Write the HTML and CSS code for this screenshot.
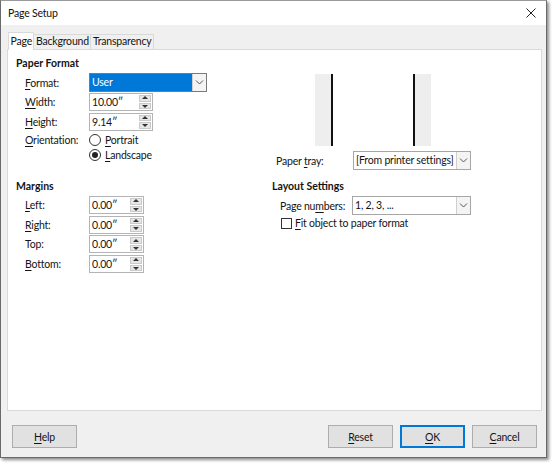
FILE: index.html
```html
<!DOCTYPE html>
<html>
<head>
<meta charset="utf-8">
<link rel="stylesheet" href="styles.css">
</head>
<body>
<div class="window">
  <div class="titlebar">
    <span class="title">Page Setup</span>
    <svg class="close" width="10" height="10" viewBox="0 0 10 10"><path d="M0.5 0.5 L9.5 9.5 M9.5 0.5 L0.5 9.5" stroke="#222" stroke-width="1"/></svg>
  </div>
  <div class="body">
    <div class="tabs">
      <div class="tab active">Page</div>
      <div class="tab">Background</div>
      <div class="tab">Transparency</div>
    </div>
    <div class="panel">
      <div class="top">
        <section class="col-left">
          <h3>Paper Format</h3>
          <div class="form">
            <label><u>F</u>ormat:</label>
            <div class="combo sel wide">
              <span class="val">User</span>
              <span class="arrow"><svg width="9" height="5" viewBox="0 0 9 5"><path d="M1 0.5 L4.5 4 L8 0.5" fill="none" stroke="#555"/></svg></span>
            </div>
            <label><u>W</u>idth:</label>
            <div class="spin s1"><span class="val">10.00″</span><span class="btns"><i class="up"></i><i class="dn"></i></span></div>
            <label><u>H</u>eight:</label>
            <div class="spin s1"><span class="val">9.14″</span><span class="btns"><i class="up"></i><i class="dn"></i></span></div>
            <label class="top-label"><u>O</u>rientation:</label>
            <div class="radios">
              <div class="radio"><span class="dot"></span><span><u>P</u>ortrait</span></div>
              <div class="radio"><span class="dot on"></span><span><u>L</u>andscape</span></div>
            </div>
          </div>
        </section>
        <section class="col-right">
          <div class="preview">
            <div class="edge left"></div>
            <div class="gap"></div>
            <div class="edge right"></div>
          </div>
          <div class="tray">
            <label>Paper <u>t</u>ray:</label>
            <div class="combo tray-combo">
              <span class="val">[From printer settings]</span>
              <span class="arrow"><svg width="9" height="5" viewBox="0 0 9 5"><path d="M1 0.5 L4.5 4 L8 0.5" fill="none" stroke="#555"/></svg></span>
            </div>
          </div>
        </section>
      </div>
      <div class="bottom">
        <section class="col-left">
          <h3>Margins</h3>
          <div class="form margins">
            <label><u>L</u>eft:</label>
            <div class="spin s2"><span class="val">0.00″</span><span class="btns"><i class="up"></i><i class="dn"></i></span></div>
            <label><u>R</u>ight:</label>
            <div class="spin s2"><span class="val">0.00″</span><span class="btns"><i class="up"></i><i class="dn"></i></span></div>
            <label>Top:</label>
            <div class="spin s2"><span class="val">0.00″</span><span class="btns"><i class="up"></i><i class="dn"></i></span></div>
            <label><u>B</u>ottom:</label>
            <div class="spin s2"><span class="val">0.00″</span><span class="btns"><i class="up"></i><i class="dn"></i></span></div>
          </div>
        </section>
        <section class="col-right layout">
          <h3>Layout Settings</h3>
          <div class="pn">
            <label>Page nu<u>m</u>bers:</label>
            <div class="combo pn-combo">
              <span class="val">1, 2, 3, ...</span>
              <span class="arrow"><svg width="9" height="5" viewBox="0 0 9 5"><path d="M1 0.5 L4.5 4 L8 0.5" fill="none" stroke="#555"/></svg></span>
            </div>
          </div>
          <div class="check"><span class="box"></span><span><u>F</u>it object to paper format</span></div>
        </section>
      </div>
    </div>
    <div class="buttons">
      <button class="btn"><u>H</u>elp</button>
      <div class="right-btns">
        <button class="btn"><u>R</u>eset</button>
        <button class="btn default"><u>O</u>K</button>
        <button class="btn"><u>C</u>ancel</button>
      </div>
    </div>
  </div>
</div>
</body>
</html>
```

FILE: styles.css
```css
* { box-sizing: border-box; }

html, body {
  margin: 0;
  padding: 0;
  background: #fff;
}

body {
  font-family: Lato, "Noto Sans", sans-serif;
  font-size: 10.5px;
  letter-spacing: -0.2px;
  color: #141414;
  width: 552px;
  height: 463px;
  overflow: hidden;
}

u { text-decoration: underline; text-underline-offset: 1.5px; }

label { white-space: nowrap; }

.window {
  width: 547px;
  height: 458px;
  border: 1px solid #6a6a6a;
  border-top-color: #9a9a9a;
  background: #f0f0f0;
  box-shadow: 2px 2px 3px rgba(0,0,0,0.45);
  display: flex;
  flex-direction: column;
}

.titlebar {
  height: 24px;
  background: #fff;
  display: flex;
  align-items: center;
  justify-content: space-between;
  padding: 0 10px 0 7px;
  flex: none;
}

.title { font-size: 10.5px; color: #111; }

.close { display: block; }

.body {
  flex: 1;
  padding: 7px 4px 0 6px;
  display: flex;
  flex-direction: column;
}

/* tab strip */
.tabs {
  display: flex;
  align-items: flex-end;
  height: 17px;
  padding-left: 1px;
  position: relative;
  z-index: 1;
}

.tab {
  height: 15px;
  line-height: 13px;
  padding: 0 1.5px;
  border: 1px solid #d9d9d9;
  border-bottom: none;
  background: #f0f0f0;
  margin-left: -1px;
}

.tab.active {
  height: 18px;
  background: #fff;
  margin-bottom: -1px;
  line-height: 17px;
  padding: 0 1.5px;
  margin-left: 0;
}

.panel {
  width: 535px;
  height: 362px;
  background: #fff;
  border: 1px solid #d9d9d9;
  display: flex;
  flex-direction: column;
  padding: 5px 0 0 8px;
}

h3 {
  margin: 0;
  font-size: 10.5px;
  letter-spacing: 0;
  font-weight: bold;
  line-height: 16px;
  height: 16px;
}

.top { display: flex; height: 123px; flex: none; }
.bottom { display: flex; }

.col-left { width: 256px; flex: none; }
.col-right { flex: 1; }

.form {
  display: grid;
  grid-template-columns: 64px auto;
  grid-auto-rows: 18px;
  justify-content: start;
  align-items: center;
  row-gap: 1.5px;
  padding-left: 9px;
  margin-top: 2.5px;
}

.form label { line-height: 18px; }
.form .top-label { align-self: start; line-height: 16px; }

.combo {
  height: 19px;
  border: 1px solid #a6a6a6;
  display: flex;
  align-items: stretch;
  background: #fff;
}

.combo .val {
  flex: 1;
  padding-left: 2px;
  line-height: 17px;
  white-space: nowrap;
  overflow: hidden;
}

.combo .arrow {
  width: 14px;
  flex: none;
  border-left: 1px solid #cfcfcf;
  background: #f4f4f4;
  display: flex;
  align-items: center;
  justify-content: center;
}

.combo.sel { border-color: #7a7a7a; }
.combo.sel .val { background: #0078d7; color: #fff; }

.wide { width: 118px; }

.spin {
  height: 18px;
  border: 1px solid #b4b4b4;
  display: flex;
  background: #fff;
}

.spin .val {
  flex: 1;
  padding-left: 2px;
  line-height: 16px;
}

.spin .btns {
  width: 13px;
  display: flex;
  flex-direction: column;
  gap: 1px;
  padding: 1px 1px 1px 0;
}

.spin .btns i {
  flex: 1;
  background: #e6e6e6;
  border: 1px solid #cacaca;
  position: relative;
}

.spin .btns i::after {
  content: "";
  position: absolute;
  left: 50%;
  top: 50%;
  margin-left: -3px;
  border-left: 3px solid transparent;
  border-right: 3px solid transparent;
}

.spin .btns .up::after { border-bottom: 3px solid #333; margin-top: -2px; }
.spin .btns .dn::after { border-top: 3px solid #333; margin-top: -1px; }

.s1 { width: 64px; }
.s2 { width: 55px; }

.form .radios { grid-row: span 2; align-self: start; }

.radios { display: flex; flex-direction: column; }

.radio {
  display: flex;
  align-items: center;
  gap: 4px;
  height: 15px;
}

.dot {
  width: 12px;
  height: 12px;
  border: 1px solid #333;
  border-radius: 50%;
  display: flex;
  align-items: center;
  justify-content: center;
  background: #fff;
}

.dot.on::after {
  content: "";
  width: 6px;
  height: 6px;
  border-radius: 50%;
  background: #222;
}

/* page preview */
.preview {
  display: flex;
  margin: 19px 0 0 43px;
  height: 72px;
}

.edge {
  width: 18px;
  background: #eeeeee;
}

.edge.left { border-right: 2px solid #111; }
.edge.right { border-left: 2px solid #111; }

.gap { width: 80px; }

.tray {
  display: flex;
  align-items: center;
  margin-top: 5px;
  padding-left: 4px;
}

.tray label { width: 77px; }

.tray-combo { width: 118px; }

.margins { margin-top: 2px; row-gap: 1.7px; }

.layout .pn {
  display: flex;
  align-items: center;
  margin-top: 2px;
  padding-left: 8px;
}

.pn label { width: 72px; }

.pn-combo { width: 119px; }

.check {
  display: flex;
  align-items: center;
  gap: 3px;
  margin: 1px 0 0 9px;
  height: 14px;
}

.box {
  width: 11px;
  height: 11px;
  border: 1px solid #333;
  background: #fff;
}

/* button row */
.buttons {
  display: flex;
  justify-content: space-between;
  padding: 14px 5px 0 5px;
}

.right-btns { display: flex; gap: 7px; }

.btn {
  width: 65px;
  height: 23px;
  border: 1px solid #adadad;
  background: #e1e1e1;
  font-family: inherit;
  font-size: 10.5px;
  letter-spacing: -0.2px;
  color: #141414;
  padding: 0;
}

.btn.default {
  border: 1px solid #0078d7;
  box-shadow: inset 0 0 0 1px #0078d7;
}
```
